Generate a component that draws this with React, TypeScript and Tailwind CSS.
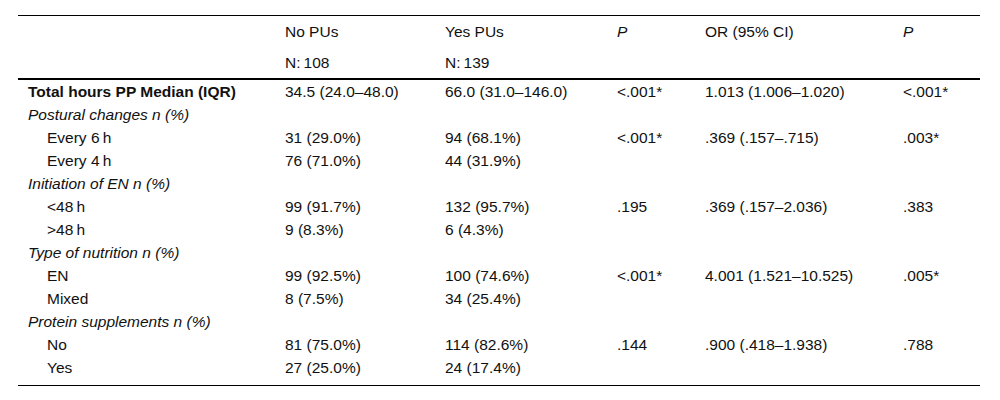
import * as React from "react";

type Row = {
  label: string;
  kind: "bold" | "group" | "item";
  no?: string;
  yes?: string;
  p?: string;
  or?: string;
  p2?: string;
};

const rows: Row[] = [
  { label: "Total hours PP Median (IQR)", kind: "bold", no: "34.5 (24.0–48.0)", yes: "66.0 (31.0–146.0)", p: "<.001*", or: "1.013 (1.006–1.020)", p2: "<.001*" },
  { label: "Postural changes n (%)", kind: "group" },
  { label: "Every 6\u2009h", kind: "item", no: "31 (29.0%)", yes: "94 (68.1%)", p: "<.001*", or: ".369 (.157–.715)", p2: ".003*" },
  { label: "Every 4\u2009h", kind: "item", no: "76 (71.0%)", yes: "44 (31.9%)" },
  { label: "Initiation of EN n (%)", kind: "group" },
  { label: "<48\u2009h", kind: "item", no: "99 (91.7%)", yes: "132 (95.7%)", p: ".195", or: ".369 (.157–2.036)", p2: ".383" },
  { label: ">48\u2009h", kind: "item", no: "9 (8.3%)", yes: "6 (4.3%)" },
  { label: "Type of nutrition n (%)", kind: "group" },
  { label: "EN", kind: "item", no: "99 (92.5%)", yes: "100 (74.6%)", p: "<.001*", or: "4.001 (1.521–10.525)", p2: ".005*" },
  { label: "Mixed", kind: "item", no: "8 (7.5%)", yes: "34 (25.4%)" },
  { label: "Protein supplements n (%)", kind: "group" },
  { label: "No", kind: "item", no: "81 (75.0%)", yes: "114 (82.6%)", p: ".144", or: ".900 (.418–1.938)", p2: ".788" },
  { label: "Yes", kind: "item", no: "27 (25.0%)", yes: "24 (17.4%)" },
];

const grid = "grid grid-cols-[267px_160px_172px_88px_198px_77px]";

export default function App() {
  return (
    <div className="w-[1000px] h-[400px] bg-white pt-[15px] pl-[18px] font-['Liberation_Sans',Arial,sans-serif] text-[15.5px] text-[#111]">
      <div className="w-[962px] border-t border-black">
        {/* Header */}
        <div className={`${grid} h-[31px] items-end pb-[4px]`}>
          <div />
          <div>No PUs</div>
          <div>Yes PUs</div>
          <div className="italic">P</div>
          <div>OR (95% CI)</div>
          <div className="italic">P</div>
        </div>
        <div className={`${grid} h-[31px] items-center`}>
          <div />
          <div>N:&#8201;108</div>
          <div>N:&#8201;139</div>
          <div />
          <div />
          <div />
        </div>

        {/* Body */}
        <div className="border-t-2 border-black border-b pb-[6px]">
          {rows.map((r) => (
            <div key={r.label} className={`${grid} h-[23px] items-center`}>
              <div
                className={
                  r.kind === "bold"
                    ? "pl-[10px] font-bold"
                    : r.kind === "group"
                      ? "pl-[10px] italic"
                      : "pl-[29px]"
                }
              >
                {r.label}
              </div>
              <div>{r.no}</div>
              <div>{r.yes}</div>
              <div>{r.p}</div>
              <div>{r.or}</div>
              <div>{r.p2}</div>
            </div>
          ))}
        </div>
      </div>
    </div>
  );
}
